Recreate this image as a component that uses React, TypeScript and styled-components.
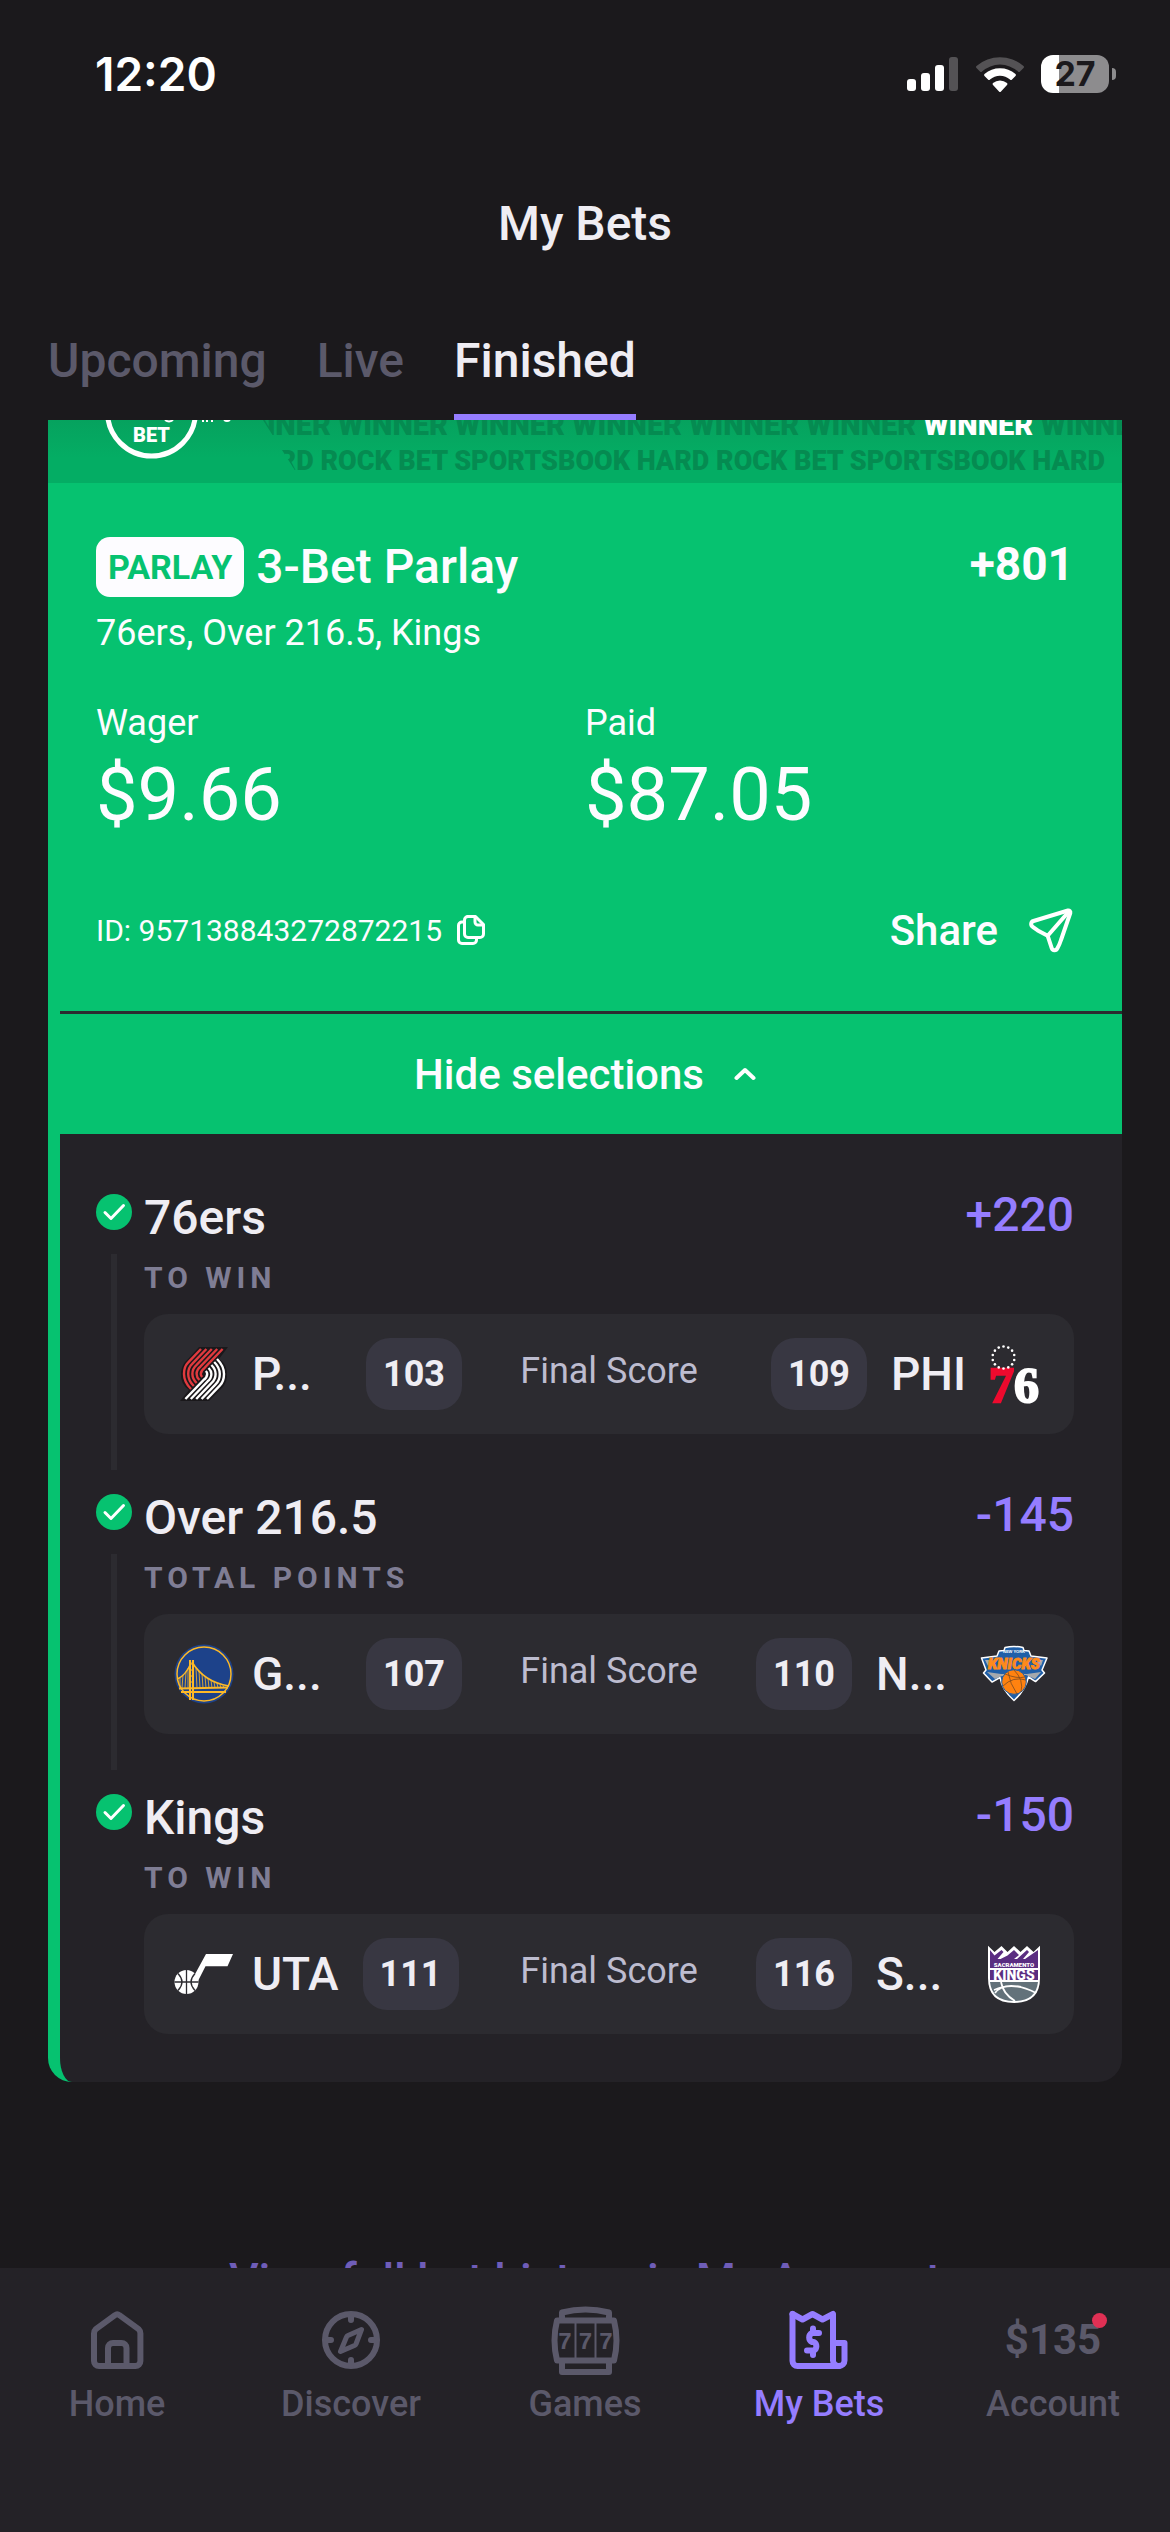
import React from 'react';
import styled, { createGlobalStyle } from 'styled-components';

const selections = [
  {
    id: 1,
    pick: '76ers',
    market: 'TO WIN',
    odds: '+220',
    away: { name: 'P...', score: 103, cut: true, logo: <BlazersLogo /> },
    home: { name: 'PHI', score: 109, cut: false, logo: <SixersLogo /> },
  },
  {
    id: 2,
    pick: 'Over 216.5',
    market: 'TOTAL POINTS',
    odds: '-145',
    away: { name: 'G...', score: 107, cut: true, logo: <WarriorsLogo /> },
    home: { name: 'N...', score: 110, cut: true, logo: <KnicksLogo /> },
  },
  {
    id: 3,
    pick: 'Kings',
    market: 'TO WIN',
    odds: '-150',
    away: { name: 'UTA', score: 111, cut: false, logo: <JazzLogo /> },
    home: { name: 'S...', score: 116, cut: true, logo: <KingsLogo /> },
  },
];

const tabs = ['Upcoming', 'Live', 'Finished'];

export default function App() {
  const [tab, setTab] = React.useState('Finished');
  const [open, setOpen] = React.useState(true);

  return (
    <Page>
      <GlobalStyle />
      <StatusBar>
        <Clock>12:20</Clock>
        <StatusIcons>
          <SignalIcon />
          <WifiIcon />
          <Battery>27</Battery>
        </StatusIcons>
      </StatusBar>

      <Title>My Bets</Title>

      <Tabs>
        {tabs.map((name) => (
          <Tab key={name} $active={name === tab} onClick={() => setTab(name)}>
            {name}
          </Tab>
        ))}
      </Tabs>

      <Card>
        <Banner>
          <BrandLogo />
          <BannerText>
            <BannerLine $size={29} $height={28} $indent={-38}>
              WINNER WINNER WINNER WINNER WINNER WINNER <b>WINNER</b> WINNER
            </BannerLine>
            <BannerLine $size={27} $height={44} $indent={-18}>
              HARD ROCK BET SPORTSBOOK HARD ROCK BET SPORTSBOOK HARD
            </BannerLine>
          </BannerText>
        </Banner>

        <Summary>
          <SummaryTop>
            <Badge>PARLAY</Badge>
            <BetName>3-Bet Parlay</BetName>
            <TotalOdds>+801</TotalOdds>
          </SummaryTop>
          <Legs>76ers, Over 216.5, Kings</Legs>
          <Amounts>
            <div>
              <AmountLabel>Wager</AmountLabel>
              <Amount>$9.66</Amount>
            </div>
            <div>
              <AmountLabel>Paid</AmountLabel>
              <Amount>$87.05</Amount>
            </div>
          </Amounts>
          <SummaryFooter>
            <BetId>
              ID: 957138843272872215
              <IconButton aria-label="Copy bet ID">
                <CopyIcon />
              </IconButton>
            </BetId>
            <ShareButton>
              Share
              <SendIcon />
            </ShareButton>
          </SummaryFooter>
        </Summary>

        <Toggle onClick={() => setOpen(!open)}>
          Hide selections
          <ChevronIcon />
        </Toggle>

        {open && (
          <Selections>
            {selections.map((s) => (
              <Selection key={s.id}>
                <Rail>
                  <CheckIcon />
                  <RailLine />
                </Rail>
                <SelectionBody>
                  <SelectionTop>
                    <Pick>{s.pick}</Pick>
                    <Odds>{s.odds}</Odds>
                  </SelectionTop>
                  <Market>{s.market}</Market>
                  <Match>
                    <Side>
                      {s.away.logo}
                      <TeamName $cut={s.away.cut}>{s.away.name}</TeamName>
                      <Score>{s.away.score}</Score>
                    </Side>
                    <MatchState>Final Score</MatchState>
                    <Side $end>
                      <Score>{s.home.score}</Score>
                      <TeamName $cut={s.home.cut}>{s.home.name}</TeamName>
                      {s.home.logo}
                    </Side>
                  </Match>
                </SelectionBody>
              </Selection>
            ))}
          </Selections>
        )}
      </Card>

      <HistoryLink href="#history">View full bet history in My Account</HistoryLink>

      <Nav>
        <NavItem href="#home">
          <HomeIcon />
          Home
        </NavItem>
        <NavItem href="#discover">
          <CompassIcon />
          Discover
        </NavItem>
        <NavItem href="#games">
          <SlotsIcon />
          Games
        </NavItem>
        <NavItem href="#bets" $active>
          <BetsIcon />
          My Bets
        </NavItem>
        <NavItem href="#account">
          <Balance>
            $135
            <Dot />
          </Balance>
          Account
        </NavItem>
      </Nav>
    </Page>
  );
}

/* ---------- icons ---------- */

function SignalIcon() {
  return (
    <svg width="52" height="36" viewBox="0 0 52 36" fill="#fff">
      <rect x="0" y="23" width="9" height="12" rx="3" />
      <rect x="14" y="17" width="9" height="18" rx="3" />
      <rect x="28" y="9" width="9" height="26" rx="3" />
      <rect x="42" y="1" width="9" height="34" rx="3" opacity="0.25" />
    </svg>
  );
}

function WifiIcon() {
  return (
    <svg width="50" height="38" viewBox="0 0 50 38" fill="#fff">
      <path d="M1.500 11a36 36 0 0 1 47 0q1 1 0 2l-3.500 3.500q-1 1-2 0a27 27 0 0 0-36 0q-1 1-2 0L1.500 13q-1-1 0-2z" opacity="0.25" />
      <path d="M9.500 19a24 24 0 0 1 31 0q1 1 0 2L37 24.500q-1 1-2 0a15 15 0 0 0-20 0q-1 1-2 0L9.500 21q-1-1 0-2z" />
      <path d="M18 28a11 11 0 0 1 14 0q1 1 0 2l-6 6.500q-1 1-2 0L18 30q-1-1 0-2z" />
    </svg>
  );
}

function CopyIcon() {
  return (
    <svg width="30" height="32" viewBox="0 0 30 32" fill="none" stroke="#fff" strokeWidth="3" strokeLinejoin="round" strokeLinecap="round">
      <path d="M11 2.500h8.500l8 8V20a3.500 3.500 0 0 1-3.500 3.500H12A3.500 3.500 0 0 1 8.500 20V6A3.500 3.500 0 0 1 12 2.500" />
      <path d="M19 3v5a3 3 0 0 0 3 3h5" />
      <path d="M8 8H6a3.500 3.500 0 0 0-3.500 3.500V26A3.500 3.500 0 0 0 6 29.500h11a3.500 3.500 0 0 0 3.500-3.500v-2" />
    </svg>
  );
}

function SendIcon() {
  return (
    <svg width="48" height="48" viewBox="0 0 48 48" fill="none" stroke="#fff" strokeWidth="4" strokeLinejoin="round" strokeLinecap="round">
      <path d="M42 4.500 7.500 15a3.200 3.200 0 0 0-.8 5.800l5 3.600 10 5.400 4 12.400a3 3 0 0 0 5.600.2q2.300-4 3.700-8.400L44.300 7a2 2 0 0 0-2.300-2.500z" />
      <path d="M21.700 29.800 42 6.500" />
    </svg>
  );
}

function ChevronIcon() {
  return (
    <svg width="22" height="16" viewBox="0 0 22 16" fill="none" stroke="#fff" strokeWidth="4" strokeLinejoin="round" strokeLinecap="round">
      <path d="M2.500 12 11 4l8.500 8" />
    </svg>
  );
}

function CheckIcon() {
  return (
    <svg width="36" height="36" viewBox="0 0 36 36" fill="none">
      <circle cx="18" cy="18" r="18" fill="#06c270" />
      <path d="m9 18.500 6 6 12.500-13" stroke="#fff" strokeWidth="3" strokeLinecap="round" strokeLinejoin="round" />
    </svg>
  );
}

function HomeIcon() {
  return (
    <svg width="72" height="72" viewBox="0 0 72 72" fill="none" stroke="currentColor" strokeWidth="6" strokeLinejoin="round">
      <path d="M13 29.500a6 6 0 0 1 1.800-4.300L34 11.200a3.400 3.400 0 0 1 4.400 0l19.200 14A6 6 0 0 1 59.400 29.500V57a5 5 0 0 1-5 5H18a5 5 0 0 1-5-5z" />
      <path d="M27 61V44a5 5 0 0 1 5-5h8.500a5 5 0 0 1 5 5v17" />
    </svg>
  );
}

function CompassIcon() {
  return (
    <svg width="72" height="72" viewBox="0 0 72 72" fill="none" stroke="currentColor" strokeWidth="6" strokeLinejoin="round" strokeLinecap="round">
      <circle cx="36" cy="36" r="26" />
      <path d="M36 11v5M36 56v5M11 36h5M56 36h5" />
      <path strokeWidth="5" d="M46.500 25.500 33 31.500a3 3 0 0 0-1.500 1.500l-6 14.500 14-6a3 3 0 0 0 1.500-1.500z" />
    </svg>
  );
}

function SlotsIcon() {
  return (
    <svg width="72" height="72" viewBox="0 0 72 72" fill="none" stroke="currentColor" strokeWidth="6" strokeLinejoin="round">
      <path d="M8 16.500h57q5 20 0 40H8q-5-20 0-40z" />
      <path strokeWidth="6" d="M13 15V8.500q23.500-6 47 0V15" />
      <path strokeWidth="6" d="M13 58v10h47V58" />
      <path strokeWidth="2" d="M26.500 16v41M46.500 16v41" />
      <g fill="currentColor" stroke="none" fontFamily="Liberation Mono, monospace" fontWeight="700" fontSize="24" textAnchor="middle">
        <text x="16" y="45">7</text>
        <text x="36.500" y="45">7</text>
        <text x="57" y="45">7</text>
      </g>
    </svg>
  );
}

function BetsIcon() {
  return (
    <svg width="72" height="72" viewBox="0 0 72 72" fill="none" stroke="currentColor" strokeWidth="6" strokeLinejoin="round" strokeLinecap="round">
      <path d="M9.500 10v47a5 5 0 0 0 5 5H56a5.500 5.500 0 0 0 5.500-5.500V39H50" />
      <path d="m9.500 10 10 5.500 10-5.500 10 5.500L50 10v46.500a5.500 5.500 0 0 0 6 5.500" />
      <path d="M36 29h-7a5 5 0 0 0 0 9h2a5 5 0 0 1 0 8.500h-7M30 24.500V29M30 46.500V51" />
    </svg>
  );
}

/* ---------- logos ---------- */

function BrandLogo() {
  return (
    <BrandSvg width="130" height="63" viewBox="0 0 130 63" fill="none">
      <circle cx="46.500" cy="-8" r="44" stroke="#fff" strokeWidth="5" />
      <path d="M60 0q4 3 8 0M98 0v2M102 0v2M107 0v2M119 0q3 2 6 0" stroke="#fff" strokeWidth="2" />
      <text x="46.500" y="22" fill="#fff" fontFamily="Roboto, sans-serif" fontWeight="900" fontSize="20" textAnchor="middle">
        BET
      </text>
    </BrandSvg>
  );
}

function BlazersLogo() {
  const half = [0, 1, 2, 3, 4].map((k) => {
    const sx = 27 + 5.4 * k;
    const ex = 10 + 4.2 * k;
    const ly = 5 + (sx - ex - 4) * 1.05;
    return `M${sx} 5L${ex + 4} ${ly}Q${ex} ${ly + 4 - k * 0.3} ${ex} 30Q${ex} ${38 - 1.6 * k} ${17 + 2.8 * k} ${45 - 3 * k}`;
  });
  return (
    <svg width="60" height="60" viewBox="0 0 60 60" fill="none">
      <path d="M25 3h29L45 15q9 5 8 18-1 8-7 13L35 57H6l9-11Q6 40 7 28q1-8 7-13z" fill="#1a181b" />
      <path d={half.join('')} stroke="#e03a3e" strokeWidth="2.400" />
      <path d={half.join('')} stroke="#fff" strokeWidth="2.400" transform="rotate(180 30 30)" />
    </svg>
  );
}

function SixersLogo() {
  const stars = Array.from({ length: 14 }, (_, i) => (i / 14) * Math.PI * 2 - Math.PI / 2);
  return (
    <svg width="60" height="60" viewBox="0 0 60 60">
      <g fontFamily="Liberation Serif, serif" fontWeight="700" fontSize="50">
        <text x="5" y="58" fill="#ed0a2e" stroke="#ed0a2e" strokeWidth="2.500">7</text>
        <text x="30" y="58" fill="#fff" stroke="#fff" strokeWidth="2">6</text>
      </g>
      {stars.map((a) => (
        <circle key={a} cx={19.5 + 11 * Math.cos(a)} cy={13.5 + 11 * Math.sin(a)} r="1.300" fill="#fff" />
      ))}
    </svg>
  );
}

function WarriorsLogo() {
  const hangers = [22, 25, 28, 31, 34, 37, 40, 43, 46, 49];
  return (
    <svg width="60" height="60" viewBox="0 0 60 60" fill="none" stroke="#fdb927">
      <circle cx="30" cy="30" r="29.500" fill="#1d428a" stroke="none" />
      <circle cx="30" cy="30" r="27" strokeWidth="1.500" />
      <path d="M16 16v40M19 16v40" strokeWidth="2" />
      <path d="M15 20h5M15 26h5M15 32h5M15 38h5" strokeWidth="1" />
      <path d="M17 19Q12 31 3.500 35M18 18q12 20 37 24" strokeWidth="1.500" />
      <path d="M5 44.500 54 43.500M7 48h45" strokeWidth="2" />
      <path
        d={hangers.map((x) => `M${x} ${22 + (x - 20) * 1.05 - (x - 20) ** 2 * 0.013}L${x + 1} 44`).join('') + 'M12 28l-1 16M9 31l-1 13M14 24v20M6 34v10'}
        strokeWidth="0.800"
      />
    </svg>
  );
}

function KnicksLogo() {
  return (
    <WideLogo width="60" height="60" viewBox="0 0 60 60">
      <path
        d="M-2.500 14 13 12l2-5 5-.5 1-3q9-2 18 0l1 3 5 .5 2 5 16 2-5 12 2.500 3-9 8.600-7-4.600q-3 13-14.500 23.500Q18 46 16 33.500l-8 4.600L-.5 29 2 26z"
        fill="#1f5fa8"
        stroke="#fff"
        strokeWidth="1.500"
        strokeLinejoin="round"
      />
      <path d="m3 28 14 2 26 0 14-2-6 7-9-4-24 1-7 3zM1 16l7 0-4 6zM59 16h-7l5 6z" fill="#a5a9ad" />
      <text x="30" y="9" fill="#fff" fontFamily="Liberation Sans, sans-serif" fontWeight="700" fontSize="4" textAnchor="middle">
        NEW YORK
      </text>
      <text x="30" y="25" fill="#ff8a1a" stroke="#ff8a1a" strokeWidth="0.800" fontFamily="Roboto, sans-serif" fontWeight="900" fontStyle="italic" fontSize="15" textAnchor="middle">
        KNICKS
      </text>
      <circle cx="30" cy="38" r="12.300" fill="#ff8210" stroke="#1f5fa8" strokeWidth="1" />
      <path d="M21 30q12 5 20 3M19 42q10-10 23-6M24 28q2 12 9 22M30 26q10 10 7 22" fill="none" stroke="#7a4a22" strokeWidth="0.800" />
    </WideLogo>
  );
}

function JazzLogo() {
  return (
    <svg width="60" height="60" viewBox="0 0 60 60">
      <path d="M32 10h27l-5.500 12.300H31.500L24 37l-4-5z" fill="#fff" />
      <circle cx="12.500" cy="38" r="12" fill="#fff" />
      <path d="M12.500 26v24M.5 38h24M4 29.500q8 8.500 0 17M21 29.500q-8 8.500 0 17" fill="none" stroke="#2c2b30" strokeWidth="1.300" />
    </svg>
  );
}

function KingsLogo() {
  return (
    <svg width="60" height="60" viewBox="0 0 60 60">
      <path d="M4 1.700 10.500 8 17.500 2l6 6L30 2l6.500 6L43 2l6.500 6L56 1.700V34q0 25-26 25T4 34z" fill="#fff" />
      <path d="M6 6l4.500 5.500L17.500 6l2 2-6 7h3l7-3.500L30 6l5 5-5 4h3l10-9 2 2-6 7h2l13-9v18H6z" fill="#5a2d81" />
      <path d="M6 26h48v10H6z" fill="#5a2d81" />
      <path d="M6 38h48Q52 57 30 57T6 38z" fill="#63727a" />
      <path d="M10 46q20-9 42 3M17 38q2 12 14 19M11 49q7-10 26-6" fill="none" stroke="#fff" strokeWidth="1.800" />
      <g fill="#fff" fontFamily="Roboto, sans-serif" fontWeight="900" textAnchor="middle">
        <text x="30" y="23" fontSize="6">SACRAMENTO</text>
        <text x="30" y="36" fontSize="14">KINGS</text>
      </g>
    </svg>
  );
}

/* ---------- styles ---------- */

const GlobalStyle = createGlobalStyle`
  * {
    box-sizing: border-box;
  }
  body {
    margin: 0;
    background: #1b191c;
    color: #efedf3;
    font-family: Roboto, 'Liberation Sans', sans-serif;
  }
  button {
    padding: 0;
    border: none;
    background: none;
    color: inherit;
    font: inherit;
    cursor: pointer;
  }
  a {
    text-decoration: none;
  }
  svg {
    display: block;
    flex-shrink: 0;
  }
`;

const Page = styled.div`
  display: flex;
  flex-direction: column;
  min-height: 100vh;
`;

const StatusBar = styled.div`
  display: flex;
  justify-content: space-between;
  align-items: center;
  height: 148px;
  padding: 0 53px 0 95px;
`;

const Clock = styled.span`
  color: #fff;
  font-family: Inter, sans-serif;
  font-size: 46px;
  font-weight: 600;
`;

const StatusIcons = styled.div`
  display: flex;
  align-items: center;
  gap: 16px;
`;

const Battery = styled.div`
  position: relative;
  width: 68px;
  height: 38px;
  margin-right: 8px;
  border-radius: 12px;
  background: linear-gradient(90deg, #fff 27%, #8d8c8e 27%);
  color: #1b191c;
  font-family: Inter, sans-serif;
  font-size: 34px;
  font-weight: 700;
  line-height: 38px;
  text-align: center;

  &::after {
    content: '';
    position: absolute;
    top: 13px;
    right: -7px;
    width: 4px;
    height: 12px;
    border-radius: 0 4px 4px 0;
    background: #8d8c8e;
  }
`;

const Title = styled.h1`
  margin: 0;
  height: 152px;
  font-size: 48px;
  font-weight: 500;
  line-height: 152px;
  text-align: center;
`;

const Tabs = styled.nav`
  display: flex;
  gap: 50px;
  height: 120px;
  padding: 0 48px;
`;

const Tab = styled.button<{ $active: boolean }>`
  padding-top: 6px;
  border-bottom: 6px solid ${(p) => (p.$active ? '#957dff' : 'transparent')};
  color: ${(p) => (p.$active ? '#efedf3' : '#5b596a')};
  font-size: 48px;
  font-weight: 500;
`;

const Card = styled.section`
  margin: 0 48px;
  border-left: 12px solid #06c270;
  border-radius: 0 0 24px 24px;
  background: #242227;
  color: #fdfcff;
`;

const Banner = styled.div`
  display: flex;
  height: 63px;
  margin-left: -12px;
  overflow: hidden;
  background: linear-gradient(#06a25e, #04ad64 60%);
`;

const BrandSvg = styled.svg`
  margin-left: 57px;
`;

const BannerText = styled.div`
  display: flex;
  flex: 1;
  flex-direction: column;
  justify-content: flex-end;
  overflow: hidden;
  margin-left: 24px;
  clip-path: polygon(4px 0, 100% 0, 100% 100%, 44px 100%);
`;

const BannerLine = styled.div<{ $size: number; $height: number; $indent: number }>`
  color: #058b51;
  font-size: ${(p) => p.$size}px;
  font-weight: 900;
  line-height: ${(p) => p.$height}px;
  text-indent: ${(p) => p.$indent}px;
  white-space: nowrap;

  b {
    color: #fff;
    font-weight: 900;
  }
`;

const Summary = styled.div`
  margin-left: -12px;
  padding: 54px 48px 33px;
  background: #06c270;
`;

const SummaryTop = styled.div`
  display: flex;
  align-items: center;
  gap: 12px;
`;

const Badge = styled.span`
  padding: 0 12px;
  border-radius: 14px;
  background: #fdfcff;
  color: #06c270;
  font-size: 34px;
  font-weight: 700;
  line-height: 60px;
`;

const BetName = styled.h2`
  margin: 0;
  font-size: 48px;
  font-weight: 500;
  line-height: 60px;
`;

const TotalOdds = styled.span`
  align-self: flex-start;
  margin-left: auto;
  font-size: 46px;
  font-weight: 700;
  line-height: 54px;
`;

const Legs = styled.p`
  margin: 12px 0 0;
  font-size: 36px;
  line-height: 48px;
`;

const Amounts = styled.div`
  display: grid;
  grid-template-columns: 1fr 1fr;
  margin-top: 42px;
`;

const AmountLabel = styled.div`
  font-size: 36px;
  line-height: 48px;
`;

const Amount = styled.div`
  font-size: 74px;
  line-height: 96px;
`;

const SummaryFooter = styled.div`
  display: flex;
  justify-content: space-between;
  align-items: center;
  height: 96px;
  margin-top: 39px;
`;

const BetId = styled.div`
  display: flex;
  align-items: center;
  gap: 14px;
  font-size: 30px;
`;

const IconButton = styled.button`
  display: flex;
`;

const ShareButton = styled.button`
  display: flex;
  align-items: center;
  gap: 28px;
  font-size: 42px;
  font-weight: 500;
`;

const Toggle = styled.button`
  display: flex;
  justify-content: center;
  align-items: center;
  gap: 30px;
  width: 100%;
  height: 123px;
  padding-right: 12px;
  border-top: 3px solid #2c2b30;
  background: #06c270;
  font-size: 42px;
  font-weight: 500;
`;

const Selections = styled.div`
  padding: 48px 48px 48px 36px;
`;

const Selection = styled.div`
  display: flex;
  gap: 12px;
  margin-bottom: 24px;

  &:last-child {
    margin-bottom: 0;
  }
`;

const Rail = styled.div`
  display: flex;
  flex-direction: column;
  align-items: center;
  gap: 24px;
  padding-top: 12px;
`;

const RailLine = styled.div`
  width: 6px;
  flex: 1;
  margin-bottom: -12px;
  background: #2c2b30;

  ${Selection}:last-child & {
    display: none;
  }
`;

const SelectionBody = styled.div`
  flex: 1;
  min-width: 0;
  padding-bottom: 24px;

  ${Selection}:last-child & {
    padding-bottom: 0;
  }
`;

const SelectionTop = styled.div`
  display: flex;
  justify-content: space-between;
  color: #efedf3;
`;

const Pick = styled.h3`
  margin: 0;
  font-size: 48px;
  font-weight: 500;
  line-height: 72px;
`;

const Odds = styled.span`
  color: #957dff;
  font-size: 48px;
  font-weight: 500;
  line-height: 66px;
`;

const Market = styled.div`
  color: #7f7d94;
  font-size: 30px;
  font-weight: 700;
  letter-spacing: 5px;
  line-height: 48px;
`;

const Match = styled.div`
  display: grid;
  grid-template-columns: 1fr auto 1fr;
  align-items: center;
  height: 120px;
  margin-top: 12px;
  padding: 0 30px;
  border-radius: 24px;
  background: #2c2b30;
  color: #efedf3;
`;

const Side = styled.div<{ $end?: boolean }>`
  display: flex;
  align-items: center;
  justify-content: ${(p) => (p.$end ? 'flex-end' : 'flex-start')};
`;

const TeamName = styled.span<{ $cut: boolean }>`
  min-width: ${(p) => (p.$cut ? 90 : 0)}px;
  margin: 0 18px;
  font-size: 46px;
  font-weight: 500;
`;

const Score = styled.span`
  width: 96px;
  margin: 0 6px;
  border-radius: 24px;
  background: #383742;
  font-size: 36px;
  font-weight: 700;
  line-height: 72px;
  text-align: center;
`;

const MatchState = styled.span`
  padding-bottom: 6px;
  color: #bdbccf;
  font-size: 36px;
`;

const WideLogo = styled.svg`
  overflow: visible;
`;

const HistoryLink = styled.a`
  margin-top: 174px;
  color: #6f5db8;
  font-size: 46px;
  font-weight: 500;
  line-height: 48px;
  text-align: center;
`;

const Nav = styled.nav`
  position: fixed;
  right: 0;
  bottom: 0;
  left: 0;
  display: grid;
  grid-template-columns: repeat(5, 1fr);
  height: 264px;
  padding-top: 36px;
  background: #242227;
`;

const NavItem = styled.a<{ $active?: boolean }>`
  display: flex;
  flex-direction: column;
  align-items: center;
  gap: 4px;
  color: ${(p) => (p.$active ? '#957dff' : '#5b596a')};
  font-size: 36px;
  font-weight: 500;
  line-height: 48px;
`;

const Balance = styled.span`
  position: relative;
  font-size: 42px;
  font-weight: 700;
  line-height: 72px;
`;

const Dot = styled.i`
  position: absolute;
  top: 9px;
  right: -6px;
  width: 15px;
  height: 15px;
  border-radius: 50%;
  background: #e03054;
`;
